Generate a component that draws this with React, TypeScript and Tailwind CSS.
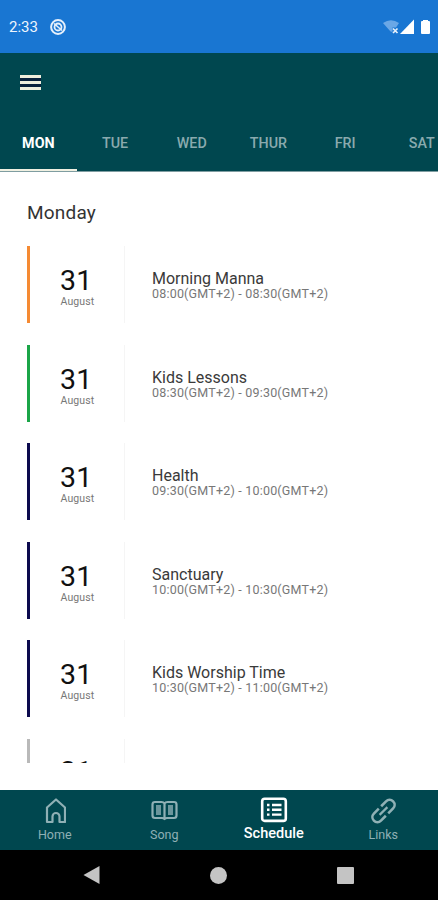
import React, { useState } from "react";

const days = ["MON", "TUE", "WED", "THUR", "FRI", "SAT"];

const events = [
  { title: "Morning Manna", time: "08:00(GMT+2) - 08:30(GMT+2)", bar: "bg-[#f58a33]" },
  { title: "Kids Lessons", time: "08:30(GMT+2) - 09:30(GMT+2)", bar: "bg-[#1ba548]" },
  { title: "Health", time: "09:30(GMT+2) - 10:00(GMT+2)", bar: "bg-[#0c0a4e]" },
  { title: "Sanctuary", time: "10:00(GMT+2) - 10:30(GMT+2)", bar: "bg-[#0c0a4e]" },
  { title: "Kids Worship Time", time: "10:30(GMT+2) - 11:00(GMT+2)", bar: "bg-[#0c0a4e]" },
  { title: "", time: "", bar: "bg-[#b9b9b9]" },
];

function HomeIcon() {
  return (
    <svg width="22" height="26" viewBox="0 0 22 26" fill="none" stroke="currentColor" strokeWidth="2.200" strokeLinejoin="round">
      <path d="M3 24V9.500L12 1.500L21 9.500V24H15.500V18.500A3.500 3.500 0 0 0 8.500 18.500V24Z" />
    </svg>
  );
}

function SongIcon() {
  return (
    <svg width="28" height="26" viewBox="0 0 28 26" fill="none" stroke="currentColor" strokeWidth="2.200" strokeLinejoin="round">
      <path d="M14.500 5.500Q13.500 4 11.500 4H5Q2.500 4 2.500 6.500V17.500Q2.500 20 5 20H12Q13.500 20 14.500 21Q15.500 20 17 20H24Q26.500 20 26.500 17.500V6.500Q26.500 4 24 4H17.500Q15.500 4 14.500 5.500V21" />
      <path d="M6 7H11V17H6ZM18 7H23V17H18Z" fill="currentColor" fillOpacity="0.75" stroke="none" />
    </svg>
  );
}

function ScheduleIcon() {
  return (
    <svg width="28" height="26" viewBox="0 0 28 26" fill="none" stroke="currentColor">
      <rect x="2.200" y="1.700" width="23.600" height="22.200" rx="2.500" strokeWidth="2.600" />
      <path d="M7 8H9.500M7 12.800H9.500M7 17.600H9.500M12 8H21.500M12 12.800H21.500M12 17.600H21.500" strokeWidth="2.400" />
    </svg>
  );
}

function LinksIcon() {
  return (
    <svg width="26" height="26" viewBox="0 0 26 26" fill="none" stroke="currentColor" strokeWidth="2.600">
      <g transform="translate(.5 0) rotate(-45 13 13)">
        <path d="M11.300 8H4.400A5 5 0 0 0 4.400 18H11.300" />
        <path d="M14.700 8H21.600A5 5 0 0 1 21.600 18H14.700" />
        <path d="M7.500 13H18.500" strokeWidth="2.200" />
      </g>
    </svg>
  );
}

const navItems = [
  { label: "Home", icon: <HomeIcon /> },
  { label: "Song", icon: <SongIcon /> },
  { label: "Schedule", icon: <ScheduleIcon /> },
  { label: "Links", icon: <LinksIcon /> },
];

export default function App() {
  const [day, setDay] = useState("MON");
  const [page, setPage] = useState("Schedule");

  return (
    <div className="flex h-[900px] w-[438px] flex-col overflow-hidden bg-white font-['Roboto',sans-serif]">
      {/* Status bar */}
      <div className="flex h-[53px] shrink-0 items-center justify-between bg-[#1976d2] pl-[9px] pr-[7px] text-white">
        <div className="flex items-center gap-[12px]">
          <span className="w-[29px] whitespace-nowrap text-[15px] leading-[20px] text-[#eef5fd]">2:33</span>
          <svg width="16" height="16" viewBox="0 0 16 16" fill="none" stroke="#e6f0fb">
            <circle cx="8" cy="8" r="6.900" strokeWidth="2" />
            <circle cx="8" cy="8" r="3.500" strokeWidth="1.800" />
            <path d="M4 4.500L12 11.500" strokeWidth="1.600" />
          </svg>
        </div>
        <svg width="48" height="16" viewBox="0 0 48 16">
          <path d="M0 4Q8 -1.500 16 4L13 8.500H9.500V13L7.500 12.500Z" fill="#6aa7e6" />
          <path d="M10 9.500L14.500 14M14.500 9.500L10 14" stroke="#e6f0fb" strokeWidth="1.700" />
          <path d="M31 0.500V15H17Z" fill="#fff" />
          <path d="M38 3Q38 2 39 2H40V1H45V2H46Q47 2 47 3V14Q47 15 46 15H39Q38 15 38 14Z" fill="#fff" />
        </svg>
      </div>

      {/* Header */}
      <div className="flex h-[119px] shrink-0 flex-col justify-between border-b border-[#7f9da1] bg-[#00474f]">
        <div className="pl-5 pt-[22px]">
          <div className="flex w-[21px] flex-col gap-[3px] bg-[#08213d]">
            <div className="h-[3px] bg-[#eeeedd]" />
            <div className="h-[3px] bg-[#eeeedd]" />
            <div className="h-[3px] bg-[#eeeedd]" />
          </div>
        </div>
        <div className="flex w-[462px]">
          {days.map((d) => (
            <button
              key={d}
              onClick={() => setDay(d)}
              className={`h-[56px] w-[76.700px] shrink-0 border-b-2 pt-[4px] text-[14.300px] ${
                day === d ? "border-[#f0f0e2] font-bold text-white" : "border-transparent font-medium text-[#8aaaae]"
              }`}
            >
              {d}
            </button>
          ))}
        </div>
      </div>

      {/* Schedule */}
      <div className="flex min-h-0 flex-1 flex-col px-[27px] pb-[27px] pt-[28px]">
        <h1 className="h-[46px] shrink-0 text-[19px] leading-[26px] tracking-[0.200px] text-[#333]">Monday</h1>
        <div className="flex min-h-0 flex-1 flex-col gap-[21.600px] overflow-hidden">
          {events.map((e, i) => (
            <div key={i} className="flex h-[77px] shrink-0">
              <div className={`w-[3.400px] ${e.bar}`} />
              <div className={`flex w-[95px] flex-col items-center border-r border-[#f5f5f5] ${e.title ? "pt-[20px]" : "pt-[18.500px]"}`}>
                <span className="-ml-[2.500px] text-[28.500px] leading-[30px] text-[#111]">31</span>
                <span className="text-[10.500px] leading-[12px] tracking-[0.100px] text-[#777]">August</span>
              </div>
              <div className="flex flex-col whitespace-nowrap pl-[26.600px] pt-[24px]">
                <span className="text-[16px] leading-[17px] text-[#3a3a3a]">{e.title}</span>
                <span className="text-[12.500px] leading-[14px] tracking-[0.200px] text-[#777]">{e.time}</span>
              </div>
            </div>
          ))}
        </div>
      </div>

      {/* Bottom tabs */}
      <div className="grid h-[60px] shrink-0 grid-cols-4 bg-[#00474f]">
        {navItems.map((n) => (
          <button
            key={n.label}
            onClick={() => setPage(n.label)}
            className={`flex flex-col items-center ${
              page === n.label
                ? "pt-[7px] text-[14.500px] font-medium text-white"
                : "pt-[8px] text-[12.500px] text-[#8fb0b5]"
            }`}
          >
            {n.icon}
            <span className="mt-[3px] leading-[16px]">{n.label}</span>
          </button>
        ))}
      </div>

      {/* System navigation */}
      <div className="flex h-[50px] shrink-0 items-center justify-between bg-black pl-[83px] pr-[84px]">
        <svg width="17" height="20" viewBox="0 0 17 20" fill="#c4c4c4">
          <path d="M16.500 1V19L0.500 10Z" />
        </svg>
        <div className="size-[17px] rounded-full bg-[#c4c4c4]" />
        <div className="size-[17px] rounded-[1px] bg-[#c4c4c4]" />
      </div>
    </div>
  );
}
